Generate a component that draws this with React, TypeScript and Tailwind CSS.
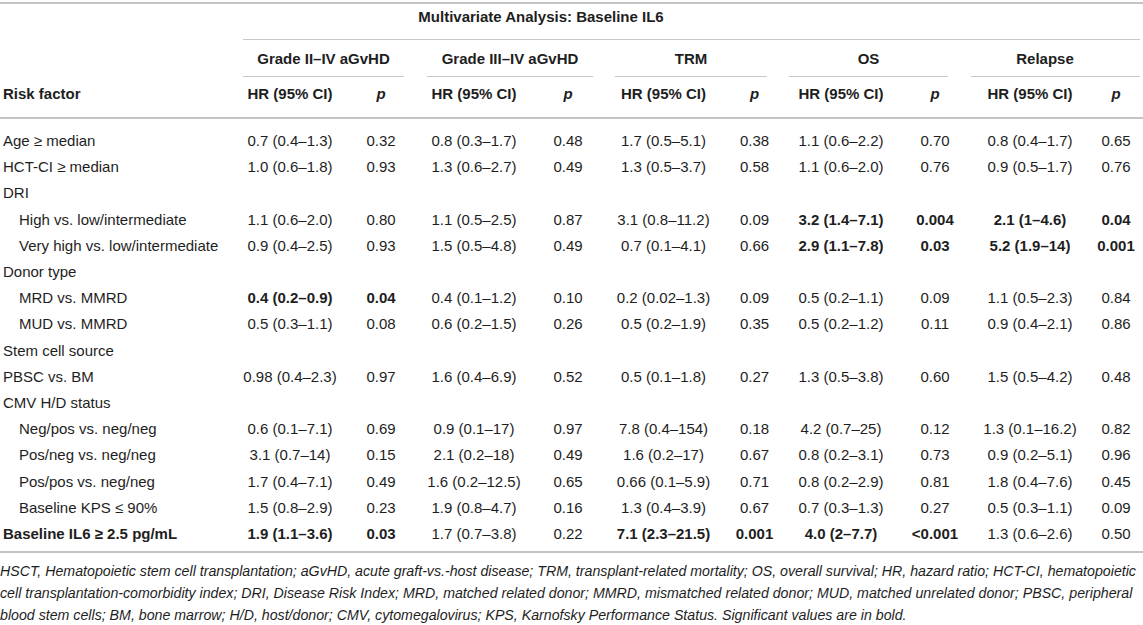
type Cell = [string, string, boolean?];
type Row = { label: string; indent?: boolean; bold?: boolean; cells?: Cell[] };

const cols =
  "grid grid-cols-[231px_118px_64px_122px_66px_125px_57px_116px_72px_118px_54px]";

const rows: Row[] = [
  { label: "Age ≥ median", cells: [["0.7 (0.4–1.3)", "0.32"], ["0.8 (0.3–1.7)", "0.48"], ["1.7 (0.5–5.1)", "0.38"], ["1.1 (0.6–2.2)", "0.70"], ["0.8 (0.4–1.7)", "0.65"]] },
  { label: "HCT-CI ≥ median", cells: [["1.0 (0.6–1.8)", "0.93"], ["1.3 (0.6–2.7)", "0.49"], ["1.3 (0.5–3.7)", "0.58"], ["1.1 (0.6–2.0)", "0.76"], ["0.9 (0.5–1.7)", "0.76"]] },
  { label: "DRI" },
  { label: "High vs. low/intermediate", indent: true, cells: [["1.1 (0.6–2.0)", "0.80"], ["1.1 (0.5–2.5)", "0.87"], ["3.1 (0.8–11.2)", "0.09"], ["3.2 (1.4–7.1)", "0.004", true], ["2.1 (1–4.6)", "0.04", true]] },
  { label: "Very high vs. low/intermediate", indent: true, cells: [["0.9 (0.4–2.5)", "0.93"], ["1.5 (0.5–4.8)", "0.49"], ["0.7 (0.1–4.1)", "0.66"], ["2.9 (1.1–7.8)", "0.03", true], ["5.2 (1.9–14)", "0.001", true]] },
  { label: "Donor type" },
  { label: "MRD vs. MMRD", indent: true, cells: [["0.4 (0.2–0.9)", "0.04", true], ["0.4 (0.1–1.2)", "0.10"], ["0.2 (0.02–1.3)", "0.09"], ["0.5 (0.2–1.1)", "0.09"], ["1.1 (0.5–2.3)", "0.84"]] },
  { label: "MUD vs. MMRD", indent: true, cells: [["0.5 (0.3–1.1)", "0.08"], ["0.6 (0.2–1.5)", "0.26"], ["0.5 (0.2–1.9)", "0.35"], ["0.5 (0.2–1.2)", "0.11"], ["0.9 (0.4–2.1)", "0.86"]] },
  { label: "Stem cell source" },
  { label: "PBSC vs. BM", cells: [["0.98 (0.4–2.3)", "0.97"], ["1.6 (0.4–6.9)", "0.52"], ["0.5 (0.1–1.8)", "0.27"], ["1.3 (0.5–3.8)", "0.60"], ["1.5 (0.5–4.2)", "0.48"]] },
  { label: "CMV H/D status" },
  { label: "Neg/pos vs. neg/neg", indent: true, cells: [["0.6 (0.1–7.1)", "0.69"], ["0.9 (0.1–17)", "0.97"], ["7.8 (0.4–154)", "0.18"], ["4.2 (0.7–25)", "0.12"], ["1.3 (0.1–16.2)", "0.82"]] },
  { label: "Pos/neg vs. neg/neg", indent: true, cells: [["3.1 (0.7–14)", "0.15"], ["2.1 (0.2–18)", "0.49"], ["1.6 (0.2–17)", "0.67"], ["0.8 (0.2–3.1)", "0.73"], ["0.9 (0.2–5.1)", "0.96"]] },
  { label: "Pos/pos vs. neg/neg", indent: true, cells: [["1.7 (0.4–7.1)", "0.49"], ["1.6 (0.2–12.5)", "0.65"], ["0.66 (0.1–5.9)", "0.71"], ["0.8 (0.2–2.9)", "0.81"], ["1.8 (0.4–7.6)", "0.45"]] },
  { label: "Baseline KPS ≤ 90%", indent: true, cells: [["1.5 (0.8–2.9)", "0.23"], ["1.9 (0.8–4.7)", "0.16"], ["1.3 (0.4–3.9)", "0.67"], ["0.7 (0.3–1.3)", "0.27"], ["0.5 (0.3–1.1)", "0.09"]] },
  { label: "Baseline IL6 ≥ 2.5 pg/mL", bold: true, cells: [["1.9 (1.1–3.6)", "0.03", true], ["1.7 (0.7–3.8)", "0.22"], ["7.1 (2.3–21.5)", "0.001", true], ["4.0 (2–7.7)", "<0.001", true], ["1.3 (0.6–2.6)", "0.50"]] },
];

export default function App() {
  return (
    <div className="w-[1143px] bg-white text-[15px] leading-5 text-[#1e1e1e] font-['Liberation_Sans',Arial,sans-serif]">
      <div className="mt-[2px] border-t-2 border-b-2 border-[#c4c4c4] pb-[4px]">
        {/* analysis title */}
        <div className={cols}>
          <div />
          <div className="col-span-10 ml-[12px] mr-[3px] h-[36px] border-b border-[#c8c8c8] pt-[3px]">
            <div className="w-[596px] text-center font-bold">Multivariate Analysis: Baseline IL6</div>
          </div>
        </div>

        {/* outcome groups */}
        <div className={cols}>
          <div />
          <div className="col-span-2 ml-[12px] mr-[9px] h-[37px] border-b border-[#c8c8c8] pt-[9px] text-center font-bold">Grade II–IV aGvHD</div>
          <div className="col-span-2 ml-[14px] mr-[8px] h-[37px] border-b border-[#c8c8c8] pt-[9px] text-center font-bold">Grade III–IV aGvHD</div>
          <div className="col-span-2 ml-[14px] mr-[16px] h-[37px] border-b border-[#c8c8c8] pt-[9px] text-center font-bold">TRM</div>
          <div className="col-span-2 ml-[6px] mr-[23px] h-[37px] border-b border-[#c8c8c8] pt-[9px] text-center font-bold">OS</div>
          <div className="col-span-2 mr-[3px] h-[37px] border-b border-[#c8c8c8] pt-[9px] pr-[21px] text-center font-bold">Relapse</div>
        </div>

        {/* column heads */}
        <div className={`${cols} h-[42px] border-b-2 border-[#c4c4c4] pt-[7px] font-bold`}>
          <div className="pl-[3px]">Risk factor</div>
          {[0, 1, 2, 3, 4].map((i) => (
            <div key={i} className="contents">
              <div className="text-center">HR (95% CI)</div>
              <div className="text-center italic">p</div>
            </div>
          ))}
        </div>

        <div className="pt-[9px]">
          {rows.map((r) => (
            <div key={r.label} className={`${cols} h-[26.2px] items-center`}>
              <div className={`whitespace-nowrap ${r.indent ? "pl-[19px]" : "pl-[3px]"} ${r.bold ? "font-bold" : ""}`}>
                {r.label}
              </div>
              {r.cells?.map(([hr, p, b], i) => (
                <div key={i} className="contents">
                  <div className={`whitespace-nowrap text-center ${b ? "font-bold" : ""}`}>{hr}</div>
                  <div className={`whitespace-nowrap text-center ${b ? "font-bold" : ""}`}>{p}</div>
                </div>
              ))}
            </div>
          ))}
        </div>
      </div>

      <p className="mt-[7px] whitespace-nowrap text-[14.2px] leading-[22px] italic text-[#1e1e1e]">
        HSCT, Hematopoietic stem cell transplantation; aGvHD, acute graft-vs.-host disease; TRM, transplant-related mortality; OS, overall survival; HR, hazard ratio; HCT-CI, hematopoietic
        <br />
        cell transplantation-comorbidity index; DRI, Disease Risk Index; MRD, matched related donor; MMRD, mismatched related donor; MUD, matched unrelated donor; PBSC, peripheral
        <br />
        blood stem cells; BM, bone marrow; H/D, host/donor; CMV, cytomegalovirus; KPS, Karnofsky Performance Status. Significant values are in bold.
      </p>
    </div>
  );
}
